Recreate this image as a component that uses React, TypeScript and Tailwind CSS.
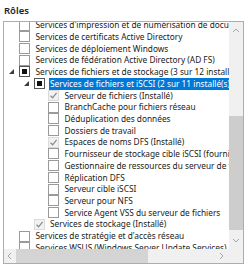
import React from "react";

type Check = "off" | "mixed" | "installed";

type Row = {
  level: number;
  label: string;
  check: Check;
  expanded?: boolean;
  selected?: boolean;
};

const rows: Row[] = [
  { level: 0, label: "Services d'impression et de numérisation de documents", check: "off" },
  { level: 0, label: "Services de certificats Active Directory", check: "off" },
  { level: 0, label: "Services de déploiement Windows", check: "off" },
  { level: 0, label: "Services de fédération Active Directory (AD FS)", check: "off" },
  { level: 0, label: "Services de fichiers et de stockage (3 sur 12 installé(s))", check: "mixed", expanded: true },
  { level: 1, label: "Services de fichiers et iSCSI (2 sur 11 installé(s))", check: "mixed", expanded: true, selected: true },
  { level: 2, label: "Serveur de fichiers (Installé)", check: "installed" },
  { level: 2, label: "BranchCache pour fichiers réseau", check: "off" },
  { level: 2, label: "Déduplication des données", check: "off" },
  { level: 2, label: "Dossiers de travail", check: "off" },
  { level: 2, label: "Espaces de noms DFS (Installé)", check: "installed" },
  { level: 2, label: "Fournisseur de stockage cible iSCSI (fournisseurs de matériel VDS et VSS)", check: "off" },
  { level: 2, label: "Gestionnaire de ressources du serveur de fichiers", check: "off" },
  { level: 2, label: "Réplication DFS", check: "off" },
  { level: 2, label: "Serveur cible iSCSI", check: "off" },
  { level: 2, label: "Serveur pour NFS", check: "off" },
  { level: 2, label: "Service Agent VSS du serveur de fichiers", check: "off" },
  { level: 1, label: "Services de stockage (Installé)", check: "installed" },
  { level: 0, label: "Services de stratégie et d'accès réseau", check: "off" },
  { level: 0, label: "Services WSUS (Windows Server Update Services)", check: "off" },
];

function Box({ check }: { check: Check }) {
  if (check === "mixed") {
    return (
      <div className="w-[11px] h-[11px] shrink-0 border border-[#555] bg-white flex items-center justify-center">
        <div className="w-[5px] h-[5px] bg-[#111]" />
      </div>
    );
  }
  if (check === "installed") {
    return (
      <div className="w-[11px] h-[11px] shrink-0 border border-[#dadada] bg-[#f2f2f2] flex items-center justify-center">
        <svg width="9" height="9" viewBox="0 0 9 9">
          <path d="M1.5 4.8 L3.6 6.8 L7.6 1.8" fill="none" stroke="#8c8c8c" strokeWidth="1.3" />
        </svg>
      </div>
    );
  }
  return <div className="w-[11px] h-[11px] shrink-0 border border-[#9a9a9a] bg-white" />;
}

function TreeRow({ row }: { row: Row }) {
  return (
    <div
      className="flex items-center h-[11.72px] whitespace-nowrap"
      style={{ paddingLeft: row.level * 14.5 }}
    >
      <div className="w-[15px] shrink-0 flex items-center justify-center">
        {row.expanded && (
          <svg width="5" height="5" viewBox="0 0 5 5">
            <polygon points="5,0 5,5 0,5" fill="#3c3c3c" />
          </svg>
        )}
      </div>
      <Box check={row.check} />
      <span
        className={
          "ml-[4px] px-[1.5px] leading-[11.72px] " +
          (row.selected ? "bg-[#0078d7] text-white pr-[40px]" : "text-[#1a1a1a]")
        }
      >
        {row.label}
      </span>
    </div>
  );
}

function Chevron({ dir }: { dir: "up" | "down" | "left" | "right" }) {
  const d = {
    up: "M1 5 L4 2 L7 5",
    down: "M1 2 L4 5 L7 2",
    left: "M5 1 L2 4 L5 7",
    right: "M2 1 L5 4 L2 7",
  }[dir];
  return (
    <svg width="8" height="8" viewBox="0 0 8 8">
      <path d={d} fill="none" stroke="#a6a6a6" strokeWidth="1" />
    </svg>
  );
}

export default function App() {
  return (
    <div
      className="w-[251px] h-[265px] bg-white overflow-hidden text-[8.3px]"
      style={{ fontFamily: '"Noto Sans", "Liberation Sans", sans-serif' }}
    >
      <div className="pl-[4px] pt-[5px] h-[21px] text-[9.5px] font-semibold text-[#1e1e1e] leading-[12px]">
        Rôles
      </div>

      <div className="ml-[3px] w-[241px] h-[243px] border border-[#adadad] grid grid-cols-[1fr_14px] grid-rows-[1fr_14px]">
        {/* tree */}
        <div className="overflow-hidden">
          <div className="-mt-[2.8px]">
            {rows.map((r, i) => (
              <TreeRow key={i} row={r} />
            ))}
          </div>
        </div>

        {/* vertical scrollbar */}
        <div className="bg-[#f0f0f0] flex flex-col">
          <div className="h-[17px] flex items-center justify-center">
            <Chevron dir="up" />
          </div>
          <div className="flex-1 flex flex-col">
            <div className="h-[77px]" />
            <div className="h-[114px] bg-[#cdcdcd]" />
          </div>
          <div className="h-[17px] flex items-center justify-center">
            <Chevron dir="down" />
          </div>
        </div>

        {/* horizontal scrollbar */}
        <div className="bg-[#f0f0f0] flex items-stretch">
          <div className="w-[12px] flex items-center justify-center">
            <Chevron dir="left" />
          </div>
          <div className="w-[132px] bg-[#d4d4d4]" />
          <div className="flex-1" />
          <div className="w-[14px] flex items-center justify-center">
            <Chevron dir="right" />
          </div>
        </div>
        <div className="bg-[#f0f0f0]" />
      </div>
    </div>
  );
}
